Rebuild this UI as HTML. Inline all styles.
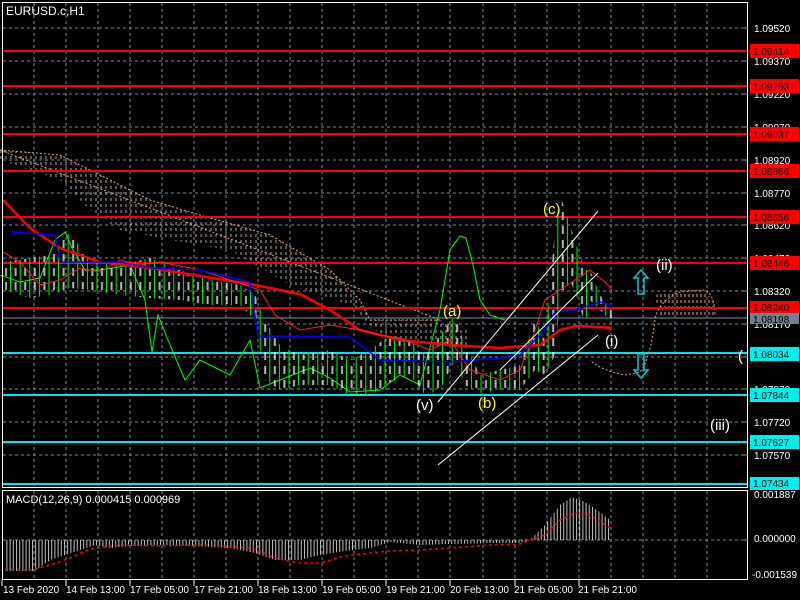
<!DOCTYPE html>
<html><head><meta charset="utf-8"><style>
html,body{margin:0;padding:0;background:#000;width:800px;height:600px;overflow:hidden}
svg{display:block;font-family:"Liberation Sans",sans-serif}
</style></head><body>
<svg width="800" height="600" viewBox="0 0 800 600" xmlns="http://www.w3.org/2000/svg">
<defs>
<pattern id="cl" width="5" height="6" patternUnits="userSpaceOnUse"><line x1="1" y1="0" x2="1" y2="3" stroke="#e8e0e0" stroke-width="1"/></pattern>
<pattern id="co" width="4" height="6" patternUnits="userSpaceOnUse"><line x1="1" y1="0" x2="1" y2="3" stroke="#f4a460" stroke-width="1"/></pattern>
<pattern id="hb" width="3.2" height="10" patternUnits="userSpaceOnUse"><line x1="0.5" y1="0" x2="0.5" y2="10" stroke="#c0c0c0" stroke-width="1"/></pattern>
<pattern id="cd" width="9.6" height="14" patternUnits="userSpaceOnUse"><line x1="1" y1="0" x2="1" y2="14" stroke="#00ff00" stroke-width="1"/><rect x="5" y="2" width="2" height="8" fill="#fff" opacity="0.7"/></pattern>
</defs>
<rect width="800" height="600" fill="#000"/>
<!-- grid -->
<g stroke="#778899" stroke-dasharray="3,3" stroke-width="1">
<path d="M34 3V487M66 3V487M98 3V487M130 3V487M162 3V487M194 3V487M226 3V487M258 3V487M290 3V487M322 3V487M354 3V487M386 3V487M418 3V487M450 3V487M483 3V487M515 3V487M547 3V487M579 3V487M611 3V487M643 3V487M675 3V487M707 3V487"/>
<path d="M3 28H747M3 61H747M3 94H747M3 127H747M3 160H747M3 193H747M3 225H747M3 258H747M3 291H747M3 324H747M3 357H747M3 389H747M3 422H747M3 455H747"/>
<path d="M34 491V579M66 491V579M98 491V579M130 491V579M162 491V579M194 491V579M226 491V579M258 491V579M290 491V579M322 491V579M354 491V579M386 491V579M418 491V579M450 491V579M483 491V579M515 491V579M547 491V579M579 491V579M611 491V579M643 491V579M675 491V579M707 491V579M3 540H747"/>
</g>
<!-- cloud -->
<polygon points="0,150 60,155 100,175 150,200 200,215 270,235 330,270 360,300 370,320 440,320 470,330 470,345 440,345 380,335 350,305 290,285 230,250 170,240 120,230 90,210 60,180 0,160" fill="url(#cl)" opacity="0.75"/>
<polygon points="0,150 60,155 100,175 150,200 200,215 270,235 330,270 360,300 370,320 440,320" fill="none" stroke="#f4a460" stroke-width="1" stroke-dasharray="2,2"/>
<polygon points="655,295 680,290 700,290 715,300 715,316 690,316 660,318" fill="url(#co)"/>
<path d="M655,318 Q660,300 680,292 L705,290 Q715,295 715,316 M655,320 Q650,360 640,372 L625,375 Q600,370 590,360" fill="none" stroke="#f4a460" stroke-width="1" stroke-dasharray="2,2"/>
<!-- horizontal levels -->
<g stroke="#ff0000" stroke-width="2">
<path d="M3 51H747M3 86H747M3 134H747M3 171H747M3 217H747M3 263H747M3 308H747"/>
</g>
<path d="M3 318H747" stroke="#8090a0" stroke-width="1"/>
<g stroke="#00e5ee" stroke-width="2">
<path d="M3 353H747M3 395H747M3 442H747M3 484H747"/>
</g>
<!-- green chinkou -->
<polyline points="0,275 20,282 40,278 55,240 65,232 72,248 85,270 100,270 130,265 145,300 152,352 158,315 168,340 185,380 200,360 230,375 250,340 260,388 280,380 310,368 330,378 350,392 380,390 400,375 420,385 440,310 450,250 460,236 466,238 473,265 480,300 490,315 505,320" fill="none" stroke="#00ff00" stroke-width="1"/>
<!-- candles -->
<polygon points="5,262 30,258 50,255 70,232 90,262 120,265 150,258 180,270 210,280 240,285 255,295 265,320 280,345 300,355 330,350 350,360 370,350 390,335 410,340 425,355 440,335 455,315 465,345 480,375 500,370 520,365 535,320 545,340 555,230 560,195 570,225 578,250 585,270 590,270 600,295 612,312 612,322 600,310 590,300 585,325 578,300 570,280 560,300 555,355 545,375 535,370 520,390 500,390 480,393 465,385 455,360 440,390 425,395 410,375 390,382 370,395 350,395 330,385 300,385 280,390 265,380 255,320 240,305 210,305 180,300 150,298 120,295 90,290 70,288 50,295 30,298 5,290" fill="url(#cd)"/>
<!-- red MA thick -->
<polyline points="3,200 30,228 60,248 100,262 150,268 200,276 250,284 300,294 330,310 360,330 400,340 450,345 500,348 540,345 560,330 575,326 600,327 612,328" fill="none" stroke="#ff0000" stroke-width="2.5"/>
<!-- kijun thin red -->
<polyline points="3,252 20,262 40,285 60,280 80,268 100,272 120,260 140,265 160,262 200,270 230,280 260,290 275,315 300,330 330,325 360,330 380,335 400,338 430,350 450,340 470,370 500,380 520,370 530,345 545,300 560,290 575,280 590,270 605,282 612,290" fill="none" stroke="#ff2020" stroke-width="1"/>
<!-- blue -->
<polyline points="10,232 55,235 60,262 120,262 150,268 200,270 250,282 258,336 350,337 380,360 450,362 500,358 520,355 545,330 555,312 575,310 600,302 612,305" fill="none" stroke="#0000ff" stroke-width="1.5"/>
<!-- channel lines -->
<g stroke="#fff" stroke-width="1">
<line x1="438" y1="402" x2="598" y2="211"/>
<line x1="438" y1="465" x2="598" y2="335"/>
<line x1="500" y1="370" x2="598" y2="273"/>
</g>
<!-- arrows -->
<path d="M641,270 L648,278 L644,278 L644,294 L638,294 L638,278 L634,278 Z" fill="none" stroke="#00cccc" stroke-width="1.5"/>
<path d="M641,378 L648,370 L644,370 L644,354 L638,354 L638,370 L634,370 Z" fill="none" stroke="#00cccc" stroke-width="1.5"/>
<!-- labels -->
<g font-size="15" fill="#ffff00">
<text x="543" y="214">(c)</text><text x="443" y="316">(a)</text><text x="478" y="408">(b)</text>
</g>
<g font-size="15" fill="#fff">
<text x="416" y="410">(v)</text><text x="605" y="346">(i)</text><text x="656" y="270">(ii)</text><text x="710" y="430">(iii)</text><text x="738" y="361">(</text>
</g>
<text x="6" y="15" font-size="12" fill="#fff">EURUSD.c,H1</text>
<!-- borders -->
<g stroke="#fff" stroke-width="1" fill="none">
<rect x="2.5" y="2.5" width="745" height="485"/>
<rect x="2.5" y="490.5" width="745" height="89"/>
</g>
<!-- MACD -->
<polygon points="5,540 5,571 35,571 50,560 65,555 80,550 95,545 110,548 130,546 160,545 190,546 230,548 255,553 275,560 300,560 320,555 345,551 370,548 390,542 420,545 450,544 490,543 520,543 530,540" fill="url(#hb)"/>
<polygon points="530,540 545,525 560,505 572,497 585,502 600,512 610,520 610,540" fill="url(#hb)"/>
<polyline points="5,569 33,570 50,565 70,558 90,549 120,545 160,546 200,545 240,547 255,549 275,558 300,563 320,563 345,556 370,553 390,551 420,550 450,548 490,545 520,544 545,535 560,520 575,513 590,515 610,528" fill="none" stroke="#ff0000" stroke-width="1.5" stroke-dasharray="3,3"/>
<text x="6" y="503" font-size="11" fill="#fff">MACD(12,26,9) 0.000415 0.000969</text>
<!-- price axis -->
<g stroke="#8090a0"><path d="M743 28H748M743 61H748M743 94H748M743 127H748M743 160H748M743 193H748M743 225H748M743 258H748M743 291H748M743 324H748M743 357H748M743 389H748M743 422H748M743 455H748M743 540H748"/></g>
<g font-size="10" fill="#fff">
<text x="754" y="32">1.09520</text><text x="754" y="65">1.09370</text><text x="754" y="98">1.09220</text><text x="754" y="131">1.09070</text><text x="754" y="164">1.08920</text><text x="754" y="197">1.08770</text><text x="754" y="229">1.08620</text><text x="754" y="262">1.08470</text><text x="754" y="295">1.08320</text><text x="754" y="328">1.08170</text><text x="754" y="393">1.07870</text><text x="754" y="426">1.07720</text><text x="754" y="459">1.07570</text>
<text x="754" y="498">0.001887</text><text x="754" y="542">0.000000</text><text x="752" y="578">-0.001539</text>
</g>
<g font-size="10">
<rect x="750" y="44" width="49" height="14" fill="#ff0000"/><text x="753" y="55" fill="#000">1.09414</text>
<rect x="750" y="79" width="49" height="14" fill="#ff0000"/><text x="753" y="90" fill="#000">1.09253</text>
<rect x="750" y="127" width="49" height="14" fill="#ff0000"/><text x="753" y="138" fill="#000">1.09037</text>
<rect x="750" y="164" width="49" height="14" fill="#ff0000"/><text x="753" y="175" fill="#000">1.08866</text>
<rect x="750" y="210" width="49" height="14" fill="#ff0000"/><text x="753" y="221" fill="#000">1.08656</text>
<rect x="750" y="256" width="49" height="14" fill="#ff0000"/><text x="753" y="267" fill="#000">1.08446</text>
<rect x="750" y="301" width="49" height="12" fill="#ff0000"/><text x="753" y="311" fill="#000">1.08240</text>
<rect x="750" y="313" width="49" height="11" fill="#708090"/><text x="753" y="323" fill="#000">1.08198</text>
<rect x="750" y="347" width="49" height="14" fill="#00eeee"/><text x="753" y="358" fill="#000">1.08034</text>
<rect x="750" y="388" width="49" height="14" fill="#00eeee"/><text x="753" y="399" fill="#000">1.07844</text>
<rect x="750" y="435" width="49" height="14" fill="#00eeee"/><text x="753" y="446" fill="#000">1.07627</text>
<rect x="750" y="477" width="49" height="13" fill="#00eeee"/><text x="753" y="487" fill="#000">1.07434</text>
</g>
<!-- time axis -->
<g stroke="#fff"><path d="M2 580V586M66 580V586M130 580V586M194 580V586M258 580V586M322 580V586M386 580V586M450 580V586M515 580V586M579 580V586"/></g>
<g font-size="10" fill="#fff">
<text x="3" y="593">13 Feb 2020</text><text x="66" y="593">14 Feb 13:00</text><text x="130" y="593">17 Feb 05:00</text><text x="194" y="593">17 Feb 21:00</text><text x="258" y="593">18 Feb 13:00</text><text x="322" y="593">19 Feb 05:00</text><text x="386" y="593">19 Feb 21:00</text><text x="450" y="593">20 Feb 13:00</text><text x="514" y="593">21 Feb 05:00</text><text x="578" y="593">21 Feb 21:00</text>
</g>
</svg>
</body></html>
